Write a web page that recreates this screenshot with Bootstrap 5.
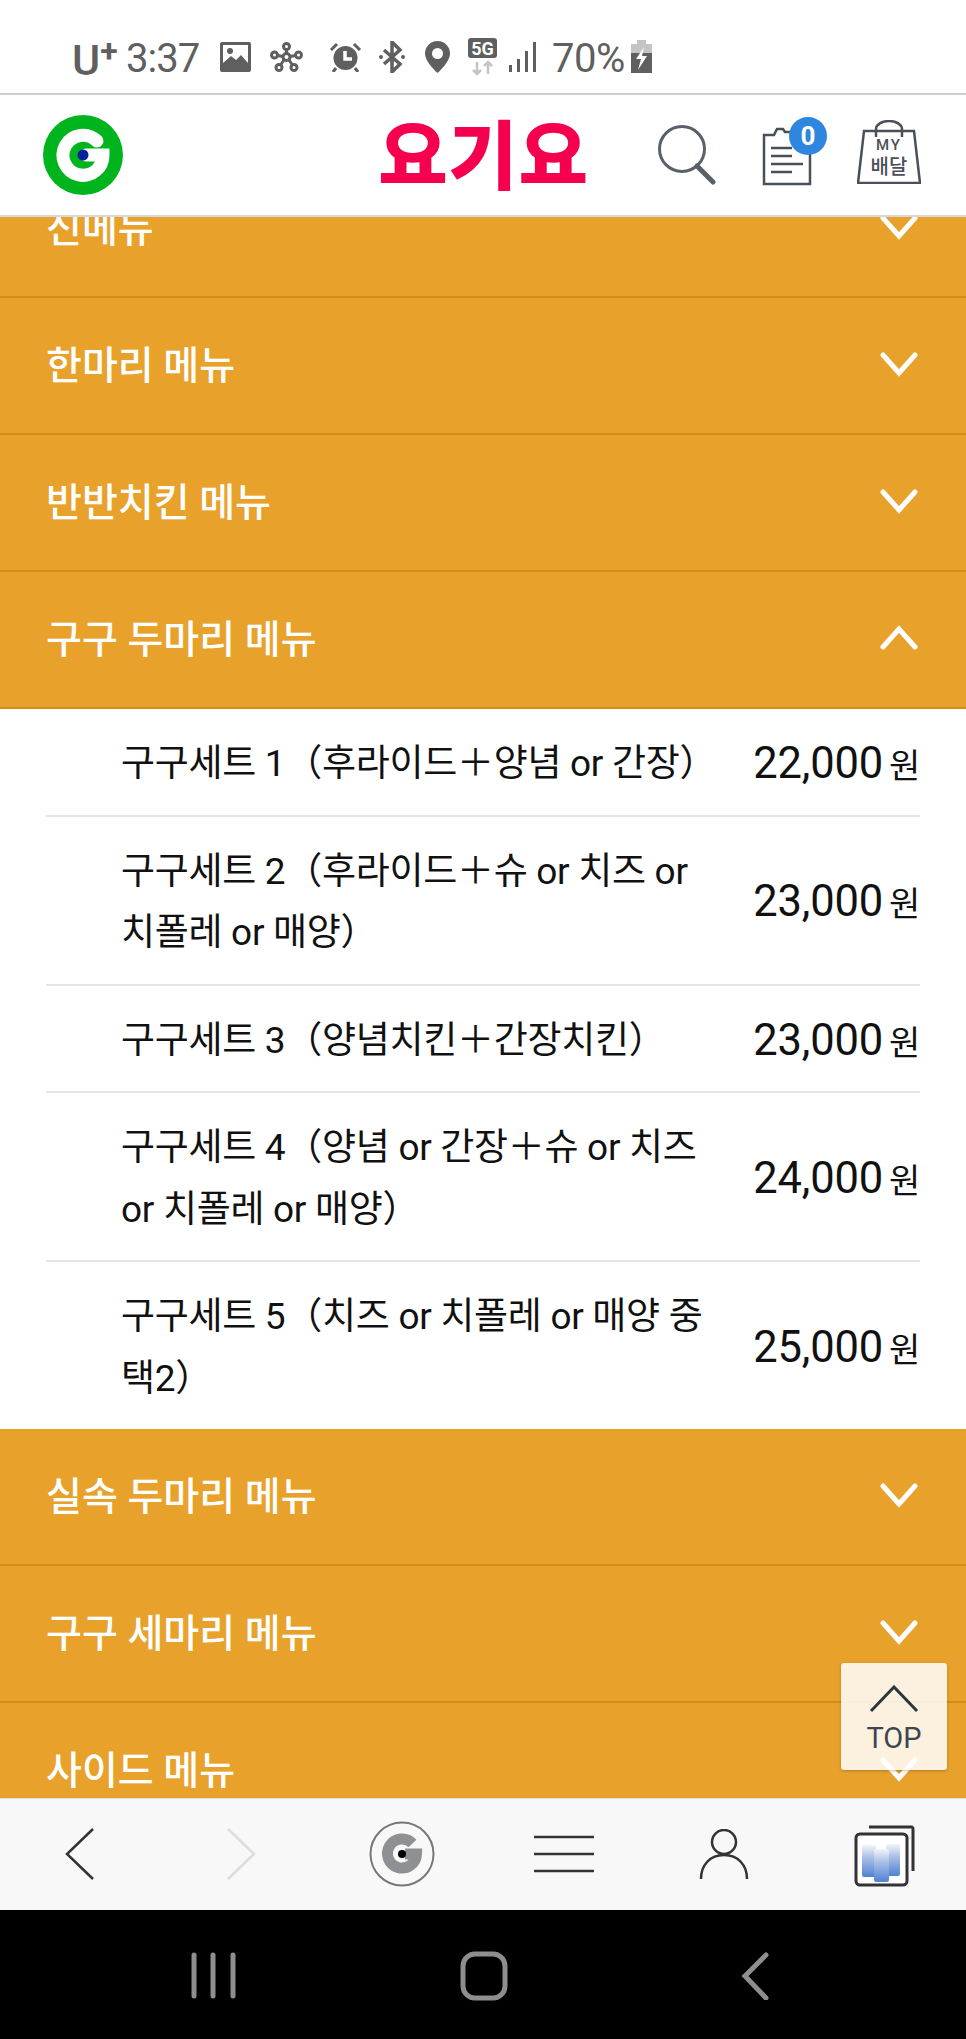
<!DOCTYPE html>
<html lang="ko">
<head>
<meta charset="utf-8">
<link href="https://cdn.jsdelivr.net/npm/bootstrap@5.3.0/dist/css/bootstrap.min.css" rel="stylesheet">
<style>
html,body{margin:0;height:2039px;overflow:hidden}
body{font-family:Roboto,"Noto Sans CJK KR",sans-serif;color:#111;background:#fff;width:966px}
.stat-bar{height:93px;padding:38px 0 0 72px;color:#5f5f5f;flex:none;font-size:40px;line-height:37px}
.stat-bar svg{display:block;flex:none}
.stat-u{font-weight:500;font-size:43px;line-height:37px;letter-spacing:-1px;width:42px;margin-top:4px;white-space:nowrap}
.stat-plus{font-size:32px;font-weight:700;position:relative;top:-13px;left:1px}
.stat-time{margin-left:12px;width:74px;letter-spacing:-1px;margin-top:2px;white-space:nowrap}
.stat-pct{margin-left:15px;width:79px;letter-spacing:-.5px;margin-top:2px}
.hdr{height:124px;border-top:2px solid #cfcfcf;border-bottom:2px solid #d8d8d8;flex:none;padding:0 46px 0 43px;position:relative;z-index:2;background:#fff}
.logo-txt{color:#f5004f;font-weight:700;font-size:74px;line-height:1;margin-left:256px;margin-top:-8px;width:209px;letter-spacing:2px;white-space:nowrap;font-family:"Noto Sans CJK KR",sans-serif;-webkit-text-stroke:2px #f5004f}
.scroller{flex:1 1 auto;overflow:hidden;position:relative;min-height:0}
.acc-list{margin-top:-56px}
.acc-head{height:137px;background:#e8a22b;border-bottom:2px solid #d08e14;color:#fff;padding:2px 48px 0 46px;font-size:39px;font-weight:500}
.acc-chev{margin-top:-5px}
.acc-body{background:#fff;padding:0 46px}
.acc-item{border-bottom:2px solid #e5e5e5;padding:24px 0 20px;font-size:37px;line-height:61.5px;color:#111}
.acc-item:last-child{border-bottom:0}
.acc-name{padding-left:75px;white-space:nowrap;letter-spacing:-.3px}
.acc-price{font-size:43.5px;white-space:nowrap;line-height:1;letter-spacing:-.2px}
.acc-won{font-size:34px;margin-left:6px;line-height:1}
.top-btn{position:absolute;left:841px;top:1446px;width:106px;height:107px;background:rgba(255,255,255,.85);border-radius:3px;box-shadow:0 1px 3px rgba(0,0,0,.25);color:#3c4650;font-size:29px;line-height:1}
.top-chev{margin-top:22px;margin-bottom:11px}
.web-nav{height:112px;background:#f8f8f8;border-top:1px solid #ddd;flex:none;position:relative}
.sys-nav{height:129px;background:#000;flex:none;position:relative}
.web-nav svg,.sys-nav svg{position:absolute}
</style>
</head>
<body class="d-flex flex-column">
<div class="stat-bar d-flex align-items-start">
  <div class="stat-u">U<span class="stat-plus">+</span></div>
  <div class="stat-time">3:37</div>
  <svg style="margin-top:4px;margin-left:20px" width="31" height="30" viewBox="0 0 31 30"><rect width="31" height="30" rx="2" fill="#5f5f5f"/><rect x="3" y="3" width="25" height="18" fill="#fff"/><circle cx="10" cy="9" r="3" fill="#5f5f5f"/><path d="M3 21l8-7 5 4 5-5 7 8z" fill="#5f5f5f"/></svg>
  <svg style="margin-top:4px;margin-left:19px" width="33" height="30" viewBox="0 0 33 30" fill="none" stroke="#5f5f5f" stroke-width="3"><circle cx="16.500" cy="15" r="3.500"/><circle cx="16.500" cy="4.500" r="3"/><circle cx="4.500" cy="13" r="3"/><circle cx="28.500" cy="13" r="3"/><circle cx="9" cy="25.500" r="3"/><circle cx="24" cy="25.500" r="3"/><path d="M16.500 7.500v4M7.500 13.500l5.500 1M25.500 13.500l-5.500 1M10.500 23l3.500-5M22.500 23l-3.500-5"/></svg>
  <svg style="margin-top:4px;margin-left:26px" width="33" height="30" viewBox="0 0 33 30"><circle cx="16.500" cy="16" r="12" fill="#5f5f5f"/><path d="M16 9v8h7" stroke="#fff" stroke-width="3.500" fill="none"/><path d="M2 8l6-6M31 8l-6-6M7 26l-3 4M26 26l3 4" stroke="#5f5f5f" stroke-width="3"/></svg>
  <svg style="margin-top:3px;margin-left:16px" width="28" height="32" viewBox="0 0 28 32" fill="none" stroke="#5f5f5f" stroke-width="3.500"><path d="M6 9l16 14-8 8V1l8 8L6 23"/><circle cx="3" cy="16" r="2" fill="#5f5f5f" stroke="none"/><circle cx="25" cy="16" r="2" fill="#5f5f5f" stroke="none"/></svg>
  <svg style="margin-top:3px;margin-left:19px" width="25" height="32" viewBox="0 0 25 32"><path d="M12.500 0C5.500 0 0 5.500 0 12.500 0 21 12.500 32 12.500 32S25 21 25 12.500C25 5.500 19.500 0 12.500 0z" fill="#5f5f5f"/><circle cx="12.500" cy="12.500" r="5.500" fill="#fff"/></svg>
  <svg style="margin-left:18px;margin-top:0" width="29" height="38" viewBox="0 0 29 38"><rect width="29" height="20" rx="3" fill="#5f5f5f"/><text x="14.500" y="16.500" text-anchor="middle" font-family="Roboto" font-weight="700" font-size="18" fill="#fff">5G</text><path d="M9 24v12M5 32l4 4 4-4M20 36V24M16 28l4-4 4 4" stroke="#c4c4c4" stroke-width="2.500" fill="none"/></svg>
  <svg style="margin-top:4px;margin-left:12px" width="28" height="30" viewBox="0 0 28 30" fill="#5f5f5f"><rect x="0" y="23" width="3" height="7"/><rect x="8" y="17" width="3" height="13"/><rect x="16" y="9" width="3" height="21"/><rect x="24" y="0" width="3" height="30"/></svg>
  <div class="stat-pct">70%</div>
  <svg style="margin-top:2px" width="21" height="33" viewBox="0 0 21 33"><rect x="6" y="0" width="9" height="4" fill="#c4c4c4"/><rect y="4" width="21" height="9" fill="#c4c4c4"/><rect y="13" width="21" height="20" fill="#5f5f5f"/><path d="M13 7L5 19h5l-3 11 9-14h-5z" fill="#fff"/></svg>
</div>
<div class="hdr d-flex align-items-center">
  <svg width="80" height="80" viewBox="0 0 80 80" style="flex:none"><circle cx="40" cy="40" r="40" fill="#00b41e"/><path d="M54 26A20 20 0 1 0 60 40H43" fill="none" stroke="#fff" stroke-width="13" stroke-linecap="round"/><circle cx="40" cy="40" r="5.500" fill="#0a1f9f"/></svg>
  <div class="logo-txt">요기요</div>
  <svg style="margin-left:68px;flex:none" width="60" height="60" viewBox="0 0 60 60" fill="none" stroke="#5a6068"><circle cx="26" cy="24" r="22.500" stroke-width="3"/><path d="M41 41l16 16" stroke-width="5" stroke-linecap="round"/></svg>
  <div class="position-relative flex-shrink-0" style="margin-left:46px;width:50px;height:60px;margin-top:2px">
    <svg width="50" height="60" viewBox="0 0 50 60" fill="none" stroke="#4a5058" stroke-width="2.500"><path d="M12 9H2v49h46V9H32l-3-3h-6l-2-3h-6z"/><path d="M9 22h21M9 30h21M9 38h32M9 46h21" stroke-width="2.500"/></svg>
    <span class="position-absolute d-flex align-items-center justify-content-center rounded-circle" style="left:27px;top:-9px;width:38px;height:38px;background:#2e86de;color:#fff;font-size:26px;font-weight:700">0</span>
  </div>
  <svg style="margin-left:45px;flex:none;margin-top:-6px" width="64" height="64" viewBox="0 0 64 64" fill="none" stroke="#4a5058" stroke-width="2.500"><path d="M7 11h50l6 52H1z"/><path d="M19 17V9a13 8 0 0 1 26 0v8"/><text x="32" y="30" text-anchor="middle" font-family="Roboto" font-weight="500" font-size="15" letter-spacing="2" fill="#4a5058" stroke="none">MY</text><text x="32" y="54" text-anchor="middle" font-family="Noto Sans CJK KR" font-weight="500" font-size="20" fill="#4a5058" stroke="none">배달</text></svg>
</div>
<div class="scroller">
  <div class="acc-list">
    <div class="acc-head d-flex align-items-center justify-content-between"><span>신메뉴</span><svg class="acc-chev" width="38" height="26" viewBox="0 0 38 26" fill="none" stroke="#fff" stroke-width="5" stroke-linecap="round"><path d="M3 4l16 18L35 4"/></svg></div>
    <div class="acc-head d-flex align-items-center justify-content-between"><span>한마리 메뉴</span><svg class="acc-chev" width="38" height="26" viewBox="0 0 38 26" fill="none" stroke="#fff" stroke-width="5" stroke-linecap="round"><path d="M3 4l16 18L35 4"/></svg></div>
    <div class="acc-head d-flex align-items-center justify-content-between"><span>반반치킨 메뉴</span><svg class="acc-chev" width="38" height="26" viewBox="0 0 38 26" fill="none" stroke="#fff" stroke-width="5" stroke-linecap="round"><path d="M3 4l16 18L35 4"/></svg></div>
    <div class="acc-head d-flex align-items-center justify-content-between"><span>구구 두마리 메뉴</span><svg class="acc-chev" width="38" height="26" viewBox="0 0 38 26" fill="none" stroke="#fff" stroke-width="5" stroke-linecap="round"><path d="M3 22L19 4l16 18"/></svg></div>
    <div class="acc-body">
      <div class="acc-item d-flex align-items-center justify-content-between"><div class="acc-name">구구세트 1（후라이드＋양념 or 간장）</div><div class="acc-price">22,000<span class="acc-won">원</span></div></div>
      <div class="acc-item d-flex align-items-center justify-content-between"><div class="acc-name">구구세트 2（후라이드＋슈 or 치즈 or<br>치폴레 or 매양）</div><div class="acc-price">23,000<span class="acc-won">원</span></div></div>
      <div class="acc-item d-flex align-items-center justify-content-between"><div class="acc-name">구구세트 3（양념치킨＋간장치킨）</div><div class="acc-price">23,000<span class="acc-won">원</span></div></div>
      <div class="acc-item d-flex align-items-center justify-content-between"><div class="acc-name">구구세트 4（양념 or 간장＋슈 or 치즈<br>or 치폴레 or 매양）</div><div class="acc-price">24,000<span class="acc-won">원</span></div></div>
      <div class="acc-item d-flex align-items-center justify-content-between"><div class="acc-name">구구세트 5（치즈 or 치폴레 or 매양 중<br>택2）</div><div class="acc-price">25,000<span class="acc-won">원</span></div></div>
    </div>
    <div class="acc-head d-flex align-items-center justify-content-between"><span>실속 두마리 메뉴</span><svg class="acc-chev" width="38" height="26" viewBox="0 0 38 26" fill="none" stroke="#fff" stroke-width="5" stroke-linecap="round"><path d="M3 4l16 18L35 4"/></svg></div>
    <div class="acc-head d-flex align-items-center justify-content-between"><span>구구 세마리 메뉴</span><svg class="acc-chev" width="38" height="26" viewBox="0 0 38 26" fill="none" stroke="#fff" stroke-width="5" stroke-linecap="round"><path d="M3 4l16 18L35 4"/></svg></div>
    <div class="acc-head d-flex align-items-center justify-content-between"><span>사이드 메뉴</span><svg class="acc-chev" width="38" height="26" viewBox="0 0 38 26" fill="none" stroke="#fff" stroke-width="5" stroke-linecap="round"><path d="M3 4l16 18L35 4"/></svg></div>
  </div>
  <div class="top-btn text-center"><svg class="d-block mx-auto top-chev" width="50" height="28" viewBox="0 0 50 28" fill="none" stroke="#2c3640" stroke-width="3"><path d="M2 26L25 2l23 24"/></svg>TOP</div>
</div>
<div class="web-nav">
  <svg style="left:64px;top:28px" width="32" height="54" viewBox="0 0 32 54" fill="none" stroke="#333" stroke-width="2.500"><path d="M29 2L3 27l26 25"/></svg>
  <svg style="left:225px;top:28px" width="32" height="54" viewBox="0 0 32 54" fill="none" stroke="#ddd" stroke-width="2.500"><path d="M3 2l26 25L3 52"/></svg>
  <svg style="left:369px;top:22px" width="66" height="66" viewBox="0 0 66 66"><circle cx="33" cy="33" r="31.500" fill="none" stroke="#777" stroke-width="2"/><path d="M43.500 22.500A14.500 14.500 0 1 0 47.500 33H36" fill="none" stroke="#8e9094" stroke-width="11"/><circle cx="33" cy="33" r="4" fill="#000"/></svg>
  <svg style="left:534px;top:36px" width="60" height="38" viewBox="0 0 60 38" stroke="#333" stroke-width="2.500"><path d="M0 2h60M0 19h60M0 36h60"/></svg>
  <svg style="left:699px;top:30px" width="50" height="50" viewBox="0 0 50 50" fill="none" stroke="#333" stroke-width="2.500"><ellipse cx="25" cy="13" rx="12" ry="12"/><path d="M2 50c0-14 9-24 23-24s23 10 23 24"/></svg>
  <svg style="left:853px;top:26px" width="62" height="62" viewBox="0 0 62 62" fill="none"><defs><linearGradient id="bot" x1="0" y1="0" x2="0" y2="1"><stop offset="0" stop-color="#f2f4f8"/><stop offset=".4" stop-color="#a9bfe6"/><stop offset="1" stop-color="#4f83d4"/></linearGradient></defs><path d="M16 2h43a2 2 0 0 1 1 2v42" stroke="#333" stroke-width="3"/><rect x="3" y="9" width="51" height="51" rx="4" fill="#fff" stroke="#333" stroke-width="3"/><rect x="9" y="20" width="14" height="32" rx="2" fill="url(#bot)"/><rect x="33" y="19" width="14" height="32" rx="2" fill="url(#bot)"/><rect x="21" y="24" width="15" height="33" rx="2" fill="url(#bot)"/></svg>
</div>
<div class="sys-nav">
  <svg style="left:190px;top:42px" width="48" height="48" viewBox="0 0 48 48" stroke="#8e8e8e" stroke-width="5" stroke-linecap="round"><path d="M4 3v41M23 3v41M43 3v41"/></svg>
  <svg style="left:460px;top:40px" width="48" height="52" viewBox="0 0 48 52" fill="none" stroke="#8e8e8e" stroke-width="5"><rect x="3" y="4" width="42" height="44" rx="12"/></svg>
  <svg style="left:740px;top:42px" width="30" height="48" viewBox="0 0 30 48" fill="none" stroke="#8e8e8e" stroke-width="5" stroke-linecap="round"><path d="M26 3L5 24l21 22"/></svg>
</div>
<script src="https://cdn.jsdelivr.net/npm/bootstrap@5.3.0/dist/js/bootstrap.bundle.min.js"></script>
</body>
</html>
